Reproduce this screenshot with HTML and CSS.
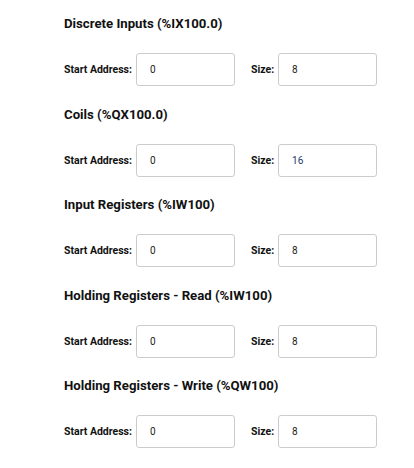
FILE: index.html
```html
<!DOCTYPE html>
<html lang="en">

<head>
  <meta charset="UTF-8">
  <meta name="viewport" content="width=device-width, initial-scale=1.0">
  <title>Modbus Settings</title>
  <link rel="stylesheet" href="styles.css">
</head>

<body>
  <div class="modbus-container">

    <div class="modbus-section">
      <h3>Discrete Inputs (%IX100.0)</h3>
      <div class="modbus-row">
        <label>Start Address:</label>
        <input type="text" value="0">
        <label class="size-label">Size:</label>
        <input type="text" value="8">
      </div>
    </div>

    <div class="modbus-section">
      <h3>Coils (%QX100.0)</h3>
      <div class="modbus-row">
        <label>Start Address:</label>
        <input type="text" value="0">
        <label class="size-label">Size:</label>
        <input type="text" class="changed" value="16">
      </div>
    </div>

    <div class="modbus-section">
      <h3>Input Registers (%IW100)</h3>
      <div class="modbus-row">
        <label>Start Address:</label>
        <input type="text" value="0">
        <label class="size-label">Size:</label>
        <input type="text" value="8">
      </div>
    </div>

    <div class="modbus-section">
      <h3>Holding Registers - Read (%IW100)</h3>
      <div class="modbus-row">
        <label>Start Address:</label>
        <input type="text" value="0">
        <label class="size-label">Size:</label>
        <input type="text" value="8">
      </div>
    </div>

    <div class="modbus-section">
      <h3>Holding Registers - Write (%QW100)</h3>
      <div class="modbus-row">
        <label>Start Address:</label>
        <input type="text" value="0">
        <label class="size-label">Size:</label>
        <input type="text" value="8">
      </div>
    </div>

  </div>
</body>

</html>
```

FILE: styles.css
```css
* {
  margin: 0px;
  padding: 0px;
  box-sizing: border-box;
  font-family: Roboto, 'Liberation Sans', sans-serif;
}

body {
  background: white;
  color: #111;
}

.modbus-container {
  padding: 16px 0 0 64px;
}

.modbus-section {
  margin-bottom: 20.5px;
}

.modbus-section h3 {
  font-size: 13.2px;
  line-height: 16px;
  font-weight: bold;
  margin-bottom: 21px;
}

.modbus-row {
  display: flex;
  align-items: center;
  height: 33px;
}

.modbus-row label {
  font-size: 10.5px;
  font-weight: bold;
  margin-right: 4px;
}

.modbus-row .size-label {
  margin-left: 16px;
}

.modbus-row input {
  height: 33px;
  width: 99px;
  padding-left: 13px;
  border: 1px solid #cccccc;
  border-radius: 3px;
  font-size: 10px;
  color: #222;
  outline: none;
}

.modbus-row input.changed {
  color: #1a3a6e;
}
```
